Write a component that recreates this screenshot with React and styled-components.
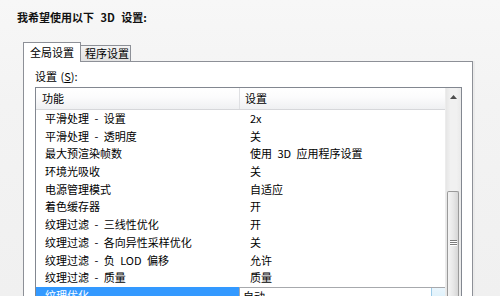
import React from 'react';
import styled, { createGlobalStyle } from 'styled-components';

const Global = createGlobalStyle`
  html, body { margin: 0; padding: 0; }
  body {
    background: #f1f1f1;
    font-family: "Noto Sans CJK SC", "Noto Sans", sans-serif;
    color: #000;
  }
`;

const Page = styled.div`
  width: 500px;
  height: 296px;
  overflow: hidden;
  box-sizing: border-box;
  padding: 10px 0 0 17px;
  background: linear-gradient(180deg, #f7f7f7 0%, #f3f3f3 35%, #f0f0f0 100%);
  display: flex;
  flex-direction: column;
`;

const Title = styled.h1`
  margin: 0;
  font-size: 11px;
  font-weight: 700;
  line-height: 14px;
  color: #111;
  word-spacing: 4px;
`;

const Dialog = styled.div`
  margin: 18px 0 0 6px;
  width: 450px;
  flex: 1;
  min-height: 0;
  display: flex;
  flex-direction: column;
`;

const TabStrip = styled.div`
  display: flex;
  align-items: flex-end;
  height: 20px;
  margin-bottom: -1px;
  position: relative;
  z-index: 1;
`;

const Tab = styled.div`
  box-sizing: border-box;
  height: ${p => (p.$active ? '20px' : '17px')};
  padding: ${p => (p.$active ? '0 6px 0 6px' : '0 1px 0 4px')};
  border: 1px solid #8d9097;
  border-left: ${p => (p.$active ? '1px solid #8d9097' : 'none')};
  border-bottom: ${p => (p.$active ? 'none' : '1px solid #8d9097')};
  background: ${p => (p.$active ? '#ffffff' : 'linear-gradient(180deg, #f4f4f4 0%, #e2e2e2 100%)')};
  font-size: 11px;
  line-height: ${p => (p.$active ? '19px' : '15px')};
  white-space: nowrap;
  color: #000;
`;

const Panel = styled.div`
  flex: 1;
  min-height: 0;
  box-sizing: border-box;
  background: #fff;
  border: 1px solid #8d9097;
  border-bottom: none;
  box-shadow: 2px 0 0 #ebebeb;
  padding: 7px 10px 0 11px;
  display: flex;
  flex-direction: column;
  position: relative;
`;

const Label = styled.div`
  font-size: 11px;
  line-height: 14px;
  margin-bottom: 4px;
  word-spacing: 1px;
`;

const Key = styled.span`
  text-decoration: underline;
`;

const ListBox = styled.div`
  flex: 1;
  min-height: 0;
  border: 1px solid #828790;
  border-bottom: none;
  display: flex;
  overflow: hidden;
`;

const Table = styled.div`
  flex: 1;
  min-width: 0;
  display: flex;
  flex-direction: column;
`;

const HeaderRow = styled.div`
  display: grid;
  grid-template-columns: 204px 1fr;
  height: 21px;
  border-bottom: 1px solid #d6d7da;
  background: linear-gradient(180deg, #ffffff 0%, #fbfbfc 45%, #eff0f2 100%);
`;

const HeaderCell = styled.div`
  font-size: 11px;
  line-height: 21px;
  padding-left: ${p => p.$pad}px;
  border-right: ${p => (p.$divider ? '1px solid #dfe0e3' : 'none')};
`;

const Row = styled.div`
  display: grid;
  grid-template-columns: ${p => (p.$selected ? '203px 1fr' : '205px 1fr')};
  height: 17.7px;
  flex: none;
`;

const Cell = styled.div`
  font-size: 11px;
  line-height: 17.7px;
  padding-left: ${p => p.$pad}px;
  white-space: nowrap;
  word-spacing: 3px;
  background: ${p => (p.$selected ? '#3399ff' : 'transparent')};
  color: ${p => (p.$selected ? '#fff' : '#000')};
`;

const Combo = styled.div`
  position: relative;
  border: 1px solid #a7a9ad;
  border-bottom: none;
  border-right: none;
  display: flex;
  font-size: 11px;
  line-height: 17px;
  padding-left: 3px;
  background: #fff;
`;

const ComboButton = styled.div`
  margin-left: auto;
  width: 13px;
  background: linear-gradient(180deg, #eaf6fd 0%, #d7eef9 100%);
  border-left: 1px solid #9ccbe8;
`;

const ScrollBar = styled.div`
  width: 16px;
  flex: none;
  display: flex;
  flex-direction: column;
  background: linear-gradient(90deg, #e6e6e6 0%, #f1f1f1 30%, #f1f1f1 70%, #e9e9e9 100%);
  border-left: 1px solid #ececec;
  box-sizing: border-box;
`;

const ArrowButton = styled.div`
  height: 17px;
  display: flex;
  align-items: center;
  justify-content: center;
  flex: none;
`;

const Track = styled.div`
  flex: 1;
  padding-top: 86px;
  display: flex;
  flex-direction: column;
`;

const Thumb = styled.div`
  flex: 1;
  margin: 0 2px 0 1px;
  border: 1px solid #9a9a9a;
  border-bottom: none;
  border-radius: 2px 2px 0 0;
  background: linear-gradient(90deg, #f4f4f4 0%, #e8e8e8 50%, #d6d6d6 100%);
  display: flex;
  flex-direction: column;
  align-items: center;
  padding-top: 48px;
`;

const Grip = styled.div`
  width: 7px;
  height: 1px;
  background: #7b7b7b;
  box-shadow: 0 1px 0 #fff;
  margin-bottom: 1px;
`;

const rows = [
  ['平滑处理 - 设置', '2x'],
  ['平滑处理 - 透明度', '关'],
  ['最大预渲染帧数', '使用 3D 应用程序设置'],
  ['环境光吸收', '关'],
  ['电源管理模式', '自适应'],
  ['着色缓存器', '开'],
  ['纹理过滤 - 三线性优化', '开'],
  ['纹理过滤 - 各向异性采样优化', '关'],
  ['纹理过滤 - 负 LOD 偏移', '允许'],
  ['纹理过滤 - 质量', '质量'],
];

export default function App() {
  return (
    <>
      <Global />
      <Page>
        <Title>我希望使用以下 3D 设置:</Title>
        <Dialog>
          <TabStrip>
            <Tab $active>全局设置</Tab>
            <Tab>程序设置</Tab>
          </TabStrip>
          <Panel>
            <Label>
              设置 (<Key>S</Key>):
            </Label>
            <ListBox>
              <Table>
                <HeaderRow>
                  <HeaderCell $pad={6} $divider>功能</HeaderCell>
                  <HeaderCell $pad={5}>设置</HeaderCell>
                </HeaderRow>
                {rows.map(([k, v]) => (
                  <Row key={k}>
                    <Cell $pad={9}>{k}</Cell>
                    <Cell $pad={9}>{v}</Cell>
                  </Row>
                ))}
                <Row $selected>
                  <Cell $pad={9} $selected>纹理优化</Cell>
                  <Combo>
                    自动
                    <ComboButton />
                  </Combo>
                </Row>
              </Table>
              <ScrollBar>
                <ArrowButton>
                  <svg width="7" height="4" viewBox="0 0 7 4">
                    <path d="M0 4 L3.5 0 L7 4 Z" fill="#4d4d4d" />
                  </svg>
                </ArrowButton>
                <Track>
                  <Thumb>
                    <Grip />
                    <Grip />
                    <Grip />
                  </Thumb>
                </Track>
              </ScrollBar>
            </ListBox>
          </Panel>
        </Dialog>
      </Page>
    </>
  );
}
